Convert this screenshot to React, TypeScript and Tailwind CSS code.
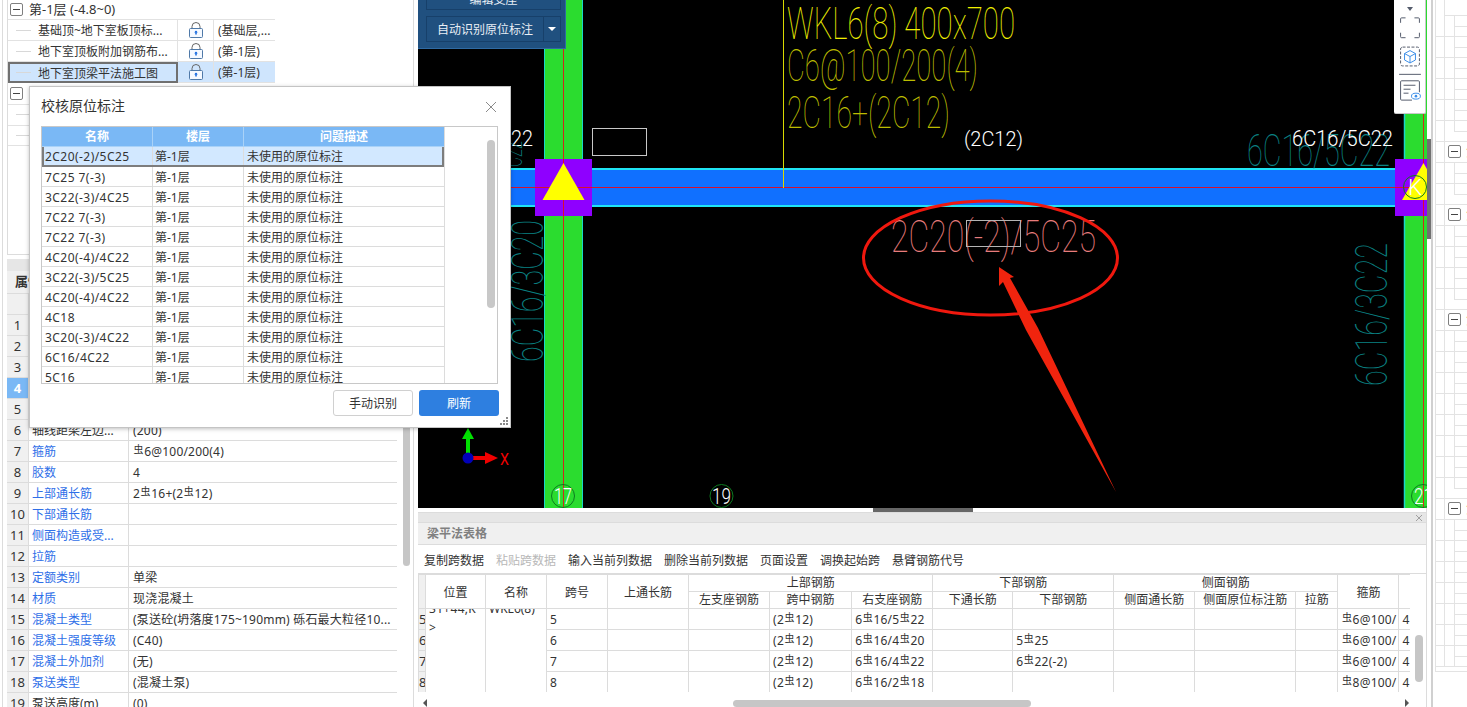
import React from "react";

const FONT = "[font-family:'Noto_Sans','Noto_Sans_CJK_SC',sans-serif]";

function Sym() {
  return <span className="text-[10px] leading-[0] align-[3px] mx-[0.5px]">虫</span>;
}

function Rebar({ s }: { s: string }) {
  const parts = s.split("#");
  return (
    <>
      {parts.map((p, i) => (
        <React.Fragment key={i}>
          {i > 0 && <Sym />}
          {p}
        </React.Fragment>
      ))}
    </>
  );
}

function MinusBox() {
  return (
    <div className="w-[13px] h-[13px] border border-[#7f7f7f] rounded-[2px] bg-white flex items-center justify-center shrink-0">
      <div className="w-[7px] h-[1px] bg-[#444]" />
    </div>
  );
}

function Lock() {
  return (
    <svg width="16" height="17" viewBox="0 0 16 17" fill="none">
      <path d="M4 7V4.500a4 4 0 0 1 8 0V7" stroke="#666" strokeWidth="1" />
      <rect x="1.500" y="6.500" width="13" height="9" rx="1" stroke="#4f79a8" strokeWidth="1" fill="#f5f9ff" />
      <path d="M8 9v3.500" stroke="#1f6fe0" strokeWidth="1.600" />
      <path d="M6.200 10.500L8 8.600l1.800 1.900z" fill="#1f6fe0" />
    </svg>
  );
}

function TreeRow({ name, floor, selected }: { name: string; floor: string; selected?: boolean }) {
  return (
    <div className={`flex h-[21px] w-[267px] border-b border-[#e2e2e2] ${selected ? "bg-[#cfe5fd]" : "bg-white"}`}>
      <div className={`w-[170px] flex items-center shrink-0 ${selected ? "border-2 border-[#707070] h-[21px] pl-[6px]" : "border-r border-[#e2e2e2] pl-[8px]"}`}>
        <div className="w-[15px] h-[1px] bg-[#d8d8d8] mr-[7px] shrink-0" />
        <span className="truncate pt-[2px]">{name}</span>
      </div>
      <div className="w-[36px] flex items-center justify-center border-r border-[#e2e2e2] shrink-0">
        <Lock />
      </div>
      <div className="pl-[4px] pt-[2px] flex items-center whitespace-nowrap">{floor}</div>
    </div>
  );
}

const props: [string, string, boolean?][] = [
  ["", ""],
  ["", ""],
  ["", ""],
  ["", ""],
  ["", ""],
  ["轴线距梁左边...", "(200)"],
  ["箍筋", "#6@100/200(4)", true],
  ["胶数", "4", true],
  ["上部通长筋", "2#16+(2#12)", true],
  ["下部通长筋", "", true],
  ["侧面构造或受...", "", true],
  ["拉筋", "", true],
  ["定额类别", "单梁", true],
  ["材质", "现浇混凝土", true],
  ["混凝土类型", "(泵送砼(坍落度175~190mm) 砾石最大粒径10...", true],
  ["混凝土强度等级", "(C40)", true],
  ["混凝土外加剂", "(无)", true],
  ["泵送类型", "(混凝土泵)", true],
  ["泵送高度(m)", "(0)"],
];

function LeftPanel() {
  return (
    <div className="w-[418px] h-full shrink-0 pl-[2px] bg-white">
      <div className="w-[412px] h-full border-x border-[#dcdcdc] flex flex-col pl-[4px] overflow-hidden">
        <div className="h-[255px] shrink-0 border-b border-[#dcdcdc] border-l">
          <div className="h-[20px] flex items-center pl-[2px] gap-[6px] w-[267px] border-b border-[#e2e2e2]">
            <MinusBox />
            <span className="text-[13px]">第-1层 (-4.8~0)</span>
          </div>
          <TreeRow name="基础顶~地下室板顶标..." floor="(基础层,..." />
          <TreeRow name="地下室顶板附加钢筋布..." floor="(第-1层)" />
          <TreeRow name="地下室顶梁平法施工图" floor="(第-1层)" selected />
          <div className="h-[21px] flex items-center pl-[2px] w-[267px]">
            <MinusBox />
          </div>
          <div className="w-[267px] h-[21px] border-t border-[#e2e2e2] pl-[8px]"><div className="w-[15px] h-[10px] border-b border-[#d8d8d8]" /></div>
          <div className="w-[267px] h-[21px] border-y border-[#e2e2e2] pl-[8px]"><div className="w-[15px] h-[10px] border-b border-[#d8d8d8]" /></div>
        </div>
        <div className="h-[12px] mt-[4px] shrink-0 bg-[#e6e6e6]" />
        <div className="h-[23px] shrink-0 flex border-b border-[#dcdcdc]">
          <div className="w-[60px] bg-[#f0f0f0] border-r border-[#dcdcdc] flex items-center pl-[8px] font-bold text-[13px]">属性</div>
        </div>
        <div className="flex">
          <div className="w-[390px] shrink-0">
            <div className="h-[21px] flex border-b border-[#dcdcdc]">
              <div className="w-[22px] bg-[#f0f0f0] border-r border-[#dcdcdc]" />
            </div>
            {props.map(([n, v, blue], i) => (
              <div key={i} className="h-[21px] flex border-b border-[#dcdcdc]">
                <div className={`w-[22px] shrink-0 flex items-center justify-center border-r border-[#dcdcdc] text-[13px] pt-[1px] ${i === 3 ? "bg-[#7ab8f5] text-white font-bold" : "bg-[#f0f0f0]"}`}>{i + 1}</div>
                <div className={`w-[100px] shrink-0 flex items-center pl-[3px] pt-[2px] border-r border-[#dcdcdc] whitespace-nowrap ${blue ? "text-[#2f6fe8]" : ""}`}>{n}</div>
                <div className="flex-1 flex items-center pl-[4px] pt-[2px] whitespace-nowrap overflow-hidden tracking-[0.2px]">
                  <span><Rebar s={v} /></span>
                </div>
              </div>
            ))}
          </div>
          <div className="ml-[6px] w-[7px] h-[272px] rounded-b-[4px] bg-[#c6c6c6]" />
        </div>
      </div>
    </div>
  );
}

const dialogRows = [
  "2C20(-2)/5C25", "7C25 7(-3)", "3C22(-3)/4C25", "7C22 7(-3)", "7C22 7(-3)", "4C20(-4)/4C22",
  "3C22(-3)/5C25", "4C20(-4)/4C22", "4C18", "3C20(-3)/4C22", "6C16/4C22", "5C16",
];

function Dialog() {
  return (
    <div className="absolute left-[29px] top-[86px] w-[482px] h-[342px] bg-white border border-[#c4c4c4] shadow-[0_1px_4px_rgba(0,0,0,0.25)] flex flex-col pl-[11px] pr-[12px]">
      <div className="h-[39px] shrink-0 flex items-center justify-between">
        <span className="text-[14px] text-[#333] -mt-[2px]">校核原位标注</span>
        <svg width="12" height="12" viewBox="0 0 12 12" className="mr-[1px]">
          <path d="M1 1l10 10M11 1L1 11" stroke="#8a8a8a" strokeWidth="1" />
        </svg>
      </div>
      <div className="h-[258px] shrink-0 border border-[#c8c8c8] flex overflow-hidden">
        <div className="w-[403px] shrink-0 border-r border-[#dcdcdc]">
          <div className="flex h-[20px] bg-[#7ab8f5] text-white font-bold text-center leading-[20px] border-b border-[#a9d2f8]">
            <div className="w-[111px] border-r border-[#a9d2f8]">名称</div>
            <div className="w-[91px] border-r border-[#a9d2f8]">楼层</div>
            <div className="flex-1">问题描述</div>
          </div>
          {dialogRows.map((r, i) => (
            <div key={i} className={`flex h-[20px] items-center ${i === 0 ? "bg-[#d2e8ff] border-x-2 border-b-2 border-[#7d7d7d]" : "border-b border-[#dcdcdc]"}`}>
              <div className={`h-full flex items-center border-r border-[#dcdcdc] tracking-[0.45px] pt-[2px] ${i === 0 ? "pl-[1px] w-[109px]" : "pl-[3px] w-[111px]"}`}>{r}</div>
              <div className="w-[91px] h-full flex items-center pl-[2px] pt-[2px] border-r border-[#dcdcdc]">第-1层</div>
              <div className="flex-1 pl-[3px] pt-[2px]">未使用的原位标注</div>
            </div>
          ))}
        </div>
        <div className="ml-[42px] mt-[13px] w-[8px] h-[168px] rounded-[4px] bg-[#c8c8c8]" />
      </div>
      <div className="flex justify-end gap-[6px] mt-[6px] -mr-[1px]">
        <div className="w-[80px] h-[26px] rounded-[3px] border border-[#d0d0d0] flex items-center justify-center pt-[1px]">手动识别</div>
        <div className="w-[80px] h-[26px] rounded-[3px] bg-[#2e7fe0] text-white flex items-center justify-center pt-[1px]">刷新</div>
      </div>
      <svg width="9" height="9" viewBox="0 0 9 9" className="absolute right-[1px] bottom-[1px]" fill="#8a8a8a">
        <rect x="6" y="0" width="2" height="2" /><rect x="3" y="3" width="2" height="2" /><rect x="6" y="3" width="2" height="2" />
        <rect x="0" y="6" width="2" height="2" /><rect x="3" y="6" width="2" height="2" /><rect x="6" y="6" width="2" height="2" />
      </svg>
    </div>
  );
}

function Cad({ x, y, w, size = 44, fill, rot, weight = 100, children }: { x: number; y: number; w: number; size?: number; fill: string; rot?: boolean; weight?: number; children: string }) {
  return (
    <text
      x={rot ? 0 : x}
      y={rot ? 0 : y}
      transform={rot ? `translate(${x} ${y}) rotate(-90)` : undefined}
      textLength={w}
      lengthAdjust="spacingAndGlyphs"
      fontFamily="Roboto, sans-serif"
      fontWeight={weight}
      fontSize={size}
      fill={fill}
    >
      {children}
    </text>
  );
}

function CadDrawing() {
  const teal = "#0a8082";
  return (
    <svg width="1009" height="508" viewBox="418 0 1009 508" className="block absolute inset-0">
      <rect x="418" y="0" width="1009" height="508" fill="#000" />
      {/* columns */}
      <rect x="544" y="0" width="39" height="508" fill="#2bdc2f" />
      <path d="M544.500 0V508M582.500 0V508" stroke="#19d8c8" strokeWidth="1" />
      <rect x="1404" y="0" width="23" height="508" fill="#2bdc2f" />
      <path d="M1404.500 0V508" stroke="#19d8c8" strokeWidth="1.500" />
      {/* beam */}
      <rect x="511" y="168" width="884" height="39" fill="#1070ff" />
      <path d="M511 169H1395M511 206H1395" stroke="#1fe4f4" strokeWidth="2" />
      <path d="M511 187.500H1427" stroke="#d8102c" strokeWidth="1" />
      <path d="M563.500 0V508M1423.500 0V508" stroke="#d0281c" strokeWidth="1" />
      {/* nodes */}
      <rect x="535" y="159" width="57" height="57" fill="#8f00ff" />
      <path d="M563.500 159V216M535 187.500H592" stroke="#d8102c" strokeWidth="1" />
      <path d="M563.500 163L584.500 200H542.500Z" fill="#ffff00" />
      <rect x="1395" y="159" width="32" height="57" fill="#8f00ff" />
      <path d="M1395 187.500H1427" stroke="#d8102c" strokeWidth="1" />
      <path d="M1423.500 159V216" stroke="#d8102c" strokeWidth="1" />
      <path d="M1423.500 163L1444 200H1402Z" fill="#ffff00" />
      <circle cx="1415" cy="187" r="11.500" fill="none" stroke="#0d7a20" strokeWidth="1" />
      <Cad x={1408} y={195} w={14} size={22} weight={300} fill="#fff">K</Cad>
      {/* yellow leader */}
      <path d="M783.500 0V188" stroke="#d8d800" strokeWidth="1" />
      <Cad x={787} y={39} w={228} fill="#f0f000">WKL6(8) 400x700</Cad>
      <Cad x={787} y={81} w={191} fill="#bcbc00">C6@100/200(4)</Cad>
      <Cad x={787} y={128} w={163} fill="#bcbc00">2C16+(2C12)</Cad>
      {/* white */}
      <rect x="592.500" y="128.500" width="54" height="27" fill="none" stroke="#c8c8c8" strokeWidth="1" />
      <Cad x={964} y={146} w={59} size={20} weight={300} fill="#fff">(2C12)</Cad>
      <Cad x={1247} y={166} w={143} fill={teal}>6C16/5C22</Cad>
      <Cad x={1292} y={146} w={101} size={22} weight={300} fill="#fff">6C16/5C22</Cad>
      <Cad x={511} y={146} w={22} size={22} weight={300} fill="#fff">22</Cad>
      {/* teal rotated */}
      <Cad x={543} y={362} w={142} fill={teal} rot>6C16/3C20</Cad>
      <Cad x={1387} y={386} w={143} fill={teal} rot>6C16/3C22</Cad>
      <Cad x={522} y={167} w={26} size={30} fill={teal} rot>C22</Cad>
      {/* annotated */}
      <Cad x={891} y={252} w={205} fill="#e87c7c">2C20(-2)/5C25</Cad>
      <rect x="966.500" y="220.500" width="54" height="26" fill="none" stroke="#b4b4b4" strokeWidth="1" />
      <ellipse cx="990.500" cy="258" rx="127" ry="57" fill="none" stroke="#f0180e" strokeWidth="3" />
      <path d="M999 267L1014 277L1010 278L1038 328L1116 492L1026 330L1003 282L999 286Z" fill="#f0240e" />
      {/* axis */}
      <path d="M466 458V438H470V458Z" fill="#00e000" />
      <path d="M462 439L468 428L474 439Z" fill="#00e000" />
      <path d="M468 456H486V460H468Z" fill="#f00000" />
      <path d="M485 452L498 458L485 464Z" fill="#f00000" />
      <circle cx="468" cy="458" r="5.500" fill="#0000b8" />
      <Cad x={500} y={465} w={9} size={17} weight={400} fill="#f00000">X</Cad>
      {/* grid bubbles */}
      <circle cx="563" cy="496" r="11.500" fill="none" stroke="#0d7a20" strokeWidth="1" />
      <Cad x={554} y={504} w={18} size={22} weight={300} fill="#fff">17</Cad>
      <circle cx="721.500" cy="496" r="11.500" fill="none" stroke="#0d7a20" strokeWidth="1" />
      <Cad x={712} y={504} w={19} size={22} weight={300} fill="#fff">19</Cad>
      <circle cx="1423" cy="496" r="11.500" fill="none" stroke="#0d7a20" strokeWidth="1" />
      <Cad x={1414} y={504} w={19} size={22} weight={300} fill="#fff">21</Cad>
    </svg>
  );
}

function CadToolbar() {
  return (
    <div className="absolute right-[1px] top-0 w-[32px] h-[114px] bg-white border-b border-r border-[#c8c8c8] flex flex-col items-center rounded-b-[2px]">
      <svg width="22" height="110" viewBox="0 0 22 110" fill="none" className="mt-[4px]">
        <path d="M8 3h6l-3 4z" fill="#555c6c" />
        <path d="M1.500 19v-4a1 1 0 0 1 1-1h4M15.500 14h4a1 1 0 0 1 1 1v4M20.500 29v4a1 1 0 0 1-1 1h-4M6.500 34h-4a1 1 0 0 1-1-1v-4" stroke="#555c6c" strokeWidth="1" />
        <rect x="1.500" y="43.500" width="19" height="19" rx="2" stroke="#555c6c" strokeDasharray="3 1.500" />
        <path d="M11 47l5.500 3v6.500L11 59.500l-5.500-3V50zM5.500 50l5.500 3 5.500-3M11 53v6.500" stroke="#3d8fe8" strokeWidth="1" />
        <path d="M0 71h22" stroke="#555c6c" strokeWidth="1" />
        <path d="M13 97H2.500a1 1 0 0 1-1-1V78.500a1 1 0 0 1 1-1h17a1 1 0 0 1 1 1V89" stroke="#555c6c" />
        <path d="M4.500 82h12M4.500 86h7M4.500 90h5" stroke="#555c6c" />
        <ellipse cx="17" cy="93" rx="4.500" ry="3" stroke="#3d8fe8" />
        <circle cx="17" cy="93" r="1.300" fill="#3d8fe8" />
      </svg>
    </div>
  );
}

function Canvas() {
  return (
    <div className="relative h-[508px] shrink-0 overflow-hidden bg-black">
      <CadDrawing />
      <div className="absolute left-0 top-0 w-[148px] h-[49px] bg-[#20507f] border-r border-b border-[#2f6aa3]">
        <div className="absolute left-[8px] -top-[10px] w-[135px] h-[20px] border border-[#17406a] flex items-center justify-center text-[#e8eef5]">编辑支座</div>
        <div className="absolute left-[8px] top-[16px] w-[135px] h-[26px] border border-[#17406a] flex text-[#e8eef5]">
          <div className="flex-1 flex items-center justify-center border-r border-[#17406a] pt-[1px]">自动识别原位标注</div>
          <div className="w-[16px] flex items-center justify-center">
            <div className="w-0 h-0 border-x-[4px] border-x-transparent border-t-[4px] border-t-white" />
          </div>
        </div>
      </div>
      <CadToolbar />
    </div>
  );
}

const cols = [7, 60, 61, 61, 81, 81, 82, 81, 80, 101, 81, 101, 42, 61, 11];
const b = "border border-[#dcdcdc]";
const th = `${b} font-normal text-center p-0 overflow-hidden whitespace-nowrap leading-[16px]`;
const td = `${b} p-0 overflow-hidden`;

function Cell({ children, className = "" }: { children?: React.ReactNode; className?: string }) {
  return (
    <td className={`${td} ${className}`}>
      <div className="h-[20px] overflow-hidden pl-[3px] whitespace-nowrap leading-[21px] tracking-[0.2px]">{children}</div>
    </td>
  );
}

const tableRows = [
  ["5", "(2#12)", "6#16/5#22", "", "#6@100/"],
  ["6", "(2#12)", "6#16/4#20", "5#25", "#6@100/"],
  ["7", "(2#12)", "6#16/4#22", "6#22(-2)", "#6@100/"],
  ["8", "(2#12)", "6#16/2#18", "", "#8@100/"],
];

function BeamTable() {
  return (
    <table className="table-fixed border-collapse w-[992px]">
      <colgroup>
        {cols.map((c, i) => (
          <col key={i} style={{ width: c }} />
        ))}
      </colgroup>
      <thead>
        <tr className="h-[17px]">
          <th rowSpan={2} className={`${th} bg-[#f0f0f0]`} />
          <th rowSpan={2} className={`${th} pt-[2px]`}>位置</th>
          <th rowSpan={2} className={`${th} pt-[2px]`}>名称</th>
          <th rowSpan={2} className={`${th} pt-[2px]`}>跨号</th>
          <th rowSpan={2} className={`${th} pt-[2px]`}>上通长筋</th>
          <th colSpan={3} className={th}>上部钢筋</th>
          <th colSpan={2} className={th}>下部钢筋</th>
          <th colSpan={3} className={th}>侧面钢筋</th>
          <th rowSpan={2} className={`${th} pt-[2px]`}>箍筋</th>
          <th rowSpan={2} className={`${th} border-r-0`} />
        </tr>
        <tr className="h-[17px]">
          {["左支座钢筋", "跨中钢筋", "右支座钢筋", "下通长筋", "下部钢筋", "侧面通长筋", "侧面原位标注筋", "拉筋"].map((h) => (
            <th key={h} className={th}>{h}</th>
          ))}
        </tr>
      </thead>
      <tbody>
        {tableRows.map((r, i) => (
          <tr key={i} className="h-[21px]">
            <td className={`${td} bg-[#f0f0f0]`}>
              <div className="h-[20px] overflow-hidden text-[13px] leading-[21px]">{r[0]}</div>
            </td>
            {i === 0 && (
              <>
                <td rowSpan={4} className={`${b} p-0 align-top`}>
                  <div className="h-[83px] overflow-hidden">
                    <div className="pl-[3px] tracking-[0.3px] -mt-[10px] leading-[19px]">31+44,K<br />&gt;</div>
                  </div>
                </td>
                <td rowSpan={4} className={`${b} p-0 align-top`}>
                  <div className="h-[83px] overflow-hidden">
                    <div className="pl-[3px] -mt-[10px] leading-[19px]">WKL6(8)</div>
                  </div>
                </td>
              </>
            )}
            <Cell>{r[0]}</Cell>
            <Cell />
            <Cell />
            <Cell><Rebar s={r[1]} /></Cell>
            <Cell><Rebar s={r[2]} /></Cell>
            <Cell />
            <Cell><Rebar s={r[3]} /></Cell>
            <Cell />
            <Cell />
            <Cell />
            <Cell><Rebar s={r[4]} /></Cell>
            <Cell className="border-r-0">4</Cell>
          </tr>
        ))}
      </tbody>
    </table>
  );
}

function BottomPanel() {
  const tools: [string, boolean?][] = [
    ["复制跨数据"], ["粘贴跨数据", true], ["输入当前列数据"], ["删除当前列数据"], ["页面设置"], ["调换起始跨"], ["悬臂钢筋代号"],
  ];
  return (
    <div className="relative flex-1 pt-[4px] bg-white flex flex-col border-r border-[#dcdcdc]">
      <div className="absolute left-[455px] top-0 w-[100px] h-[4px] bg-[#666]" />
      <div className="h-[11px] bg-[#e6e6e6] border-y border-[#dcdcdc] flex items-center justify-end pr-[3px] shrink-0">
        <svg width="8" height="8" viewBox="0 0 8 8"><path d="M1 1l6 6M7 1L1 7" stroke="#a0a0a0" /></svg>
      </div>
      <div className="h-[22px] shrink-0 bg-[#f0f0f0] border-b border-[#dcdcdc] flex items-center pl-[9px] pt-[1px] font-bold text-[#808080]">梁平法表格</div>
      <div className="h-[29px] shrink-0 flex items-center pl-[6px] pt-[3px] gap-[12px] border-b border-[#dcdcdc]">
        {tools.map(([t, dim]) => (
          <span key={t} className={dim ? "text-[#b8b8b8]" : ""}>{t}</span>
        ))}
      </div>
      <div className="flex">
        <div className="w-[992px] h-[118px] overflow-hidden shrink-0"><BeamTable /></div>
        <div className="relative flex-1">
          <div className="absolute left-[5px] top-[61px] w-[8px] h-[47px] rounded-[4px] bg-[#c6c6c6]" />
        </div>
      </div>
    </div>
  );
}

function HScroll() {
  return (
    <div className="absolute left-[418px] bottom-0 w-[992px] h-[8px] flex items-center">
      <div className="ml-[5px] w-0 h-0 border-y-[4px] border-y-transparent border-r-[4px] border-r-[#555]" />
      <div className="ml-[306px] w-[298px] h-[7px] rounded-[4px] bg-[#c6c6c6]" />
      <div className="ml-[374px] w-0 h-0 border-y-[4px] border-y-transparent border-l-[4px] border-l-[#555]" />
    </div>
  );
}

const groupRows = [6, 9, 14, 23];
function RightStrip() {
  const rows = Array.from({ length: 31 }, (_, i) => i);
  return (
    <div className="w-[40px] h-full shrink-0 relative bg-white flex">
      <div className="absolute left-0 top-[139px] w-[4px] h-[100px] bg-[#707070]" />
      <div className="ml-[4px] w-[2px] h-full bg-[#d0d0d0]" />
      <div className="ml-[2px] w-[32px] h-[672px] border-l border-[#e3e3e3] border-b overflow-hidden">
        <div className="h-[16px] border-b border-[#e3e3e3] ml-[8px] border-l" />
        {rows.map((i) => {
          const group = groupRows.includes(i);
          const last = groupRows.includes(i + 1);
          return (
            <div key={i} className="h-[21px] flex border-b border-[#e3e3e3]">
              <div className="w-[8px] shrink-0" />
              <div className="w-[10px] shrink-0 border-l border-[#e3e3e3] relative">
                {group && <div className="absolute left-[3px] top-[3px] z-10"><MinusBox /></div>}
              </div>
              {group ? (
                <div className="flex-1 pl-[12px] text-[#d08a3a] leading-[21px] overflow-hidden whitespace-nowrap">第</div>
              ) : (
                <div className={`flex-1 ${last ? "" : "border-l border-[#e3e3e3]"}`}>
                  <div className={`h-[11px] border-b border-[#e3e3e3] ${last ? "border-l" : ""}`} />
                </div>
              )}
            </div>
          );
        })}
      </div>
    </div>
  );
}

export default function App() {
  return (
    <div className={`relative w-[1467px] h-[707px] overflow-hidden bg-white flex text-[12px] text-[#333] ${FONT}`}>
      <LeftPanel />
      <div className="w-[1009px] h-full shrink-0 flex flex-col">
        <Canvas />
        <BottomPanel />
      </div>
      <RightStrip />
      <HScroll />
      <Dialog />
    </div>
  );
}
